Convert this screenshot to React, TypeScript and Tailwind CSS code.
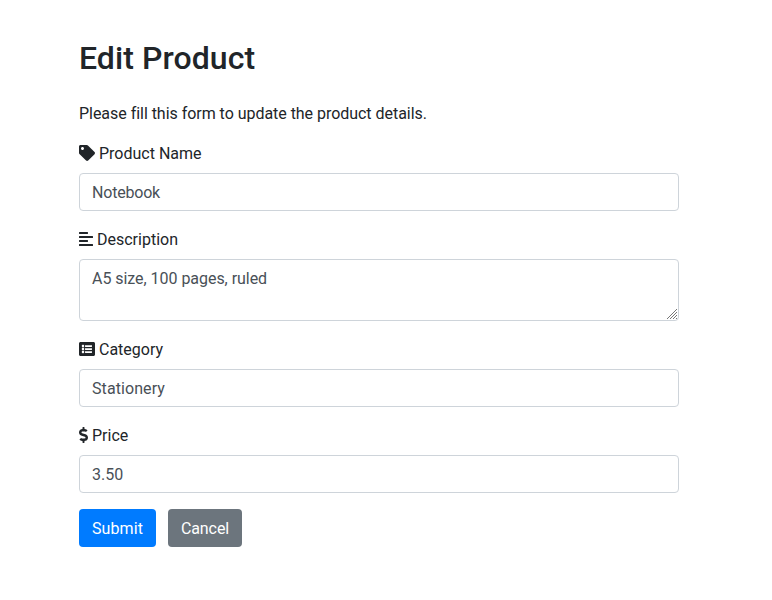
import React from "react";
import { FaTag, FaAlignLeft, FaListAlt, FaDollarSign } from "react-icons/fa";

const field =
  "block w-full rounded border border-[#ced4da] bg-white px-3 py-1.5 text-base leading-6 text-[#495057] outline-none";

function Field({ icon, label, children }: { icon: React.ReactNode; label: string; children: React.ReactNode }) {
  return (
    <div className="mb-4">
      <label className="mb-2 flex h-6 items-center gap-1">
        {icon}
        <span className="pt-0.5">{label}</span>
      </label>
      {children}
    </div>
  );
}

export default function App() {
  return (
    <div className="min-h-[600px] bg-white font-['Roboto',sans-serif] text-base leading-6 text-[#212529]">
      <div className="ml-[79px] w-[600px] pt-[39px]">
        <h2 className="mb-[25px] text-[32px] leading-[38px] font-medium tracking-[0.08px]">Edit Product</h2>
        <p className="mb-[15px] tracking-[-0.035px]">Please fill this form to update the product details.</p>
        <form>
          <Field icon={<FaTag className="h-4 w-4" />} label="Product Name">
            <input className={`${field} h-[38px] tracking-[-0.2px]`} defaultValue="Notebook" />
          </Field>
          <Field icon={<FaAlignLeft className="h-4 w-3.5" />} label="Description">
            <div className="relative">
              <textarea
                className={`${field} h-[62px] resize-none overflow-auto pt-[7px] pb-[5px] tracking-[-0.04px]`}
                defaultValue="A5 size, 100 pages, ruled"
              />
              <svg
                className="pointer-events-none absolute right-0.5 bottom-0.5 h-[10px] w-[10px]"
                viewBox="0 0 10 10"
                shapeRendering="crispEdges"
                stroke="#777"
              >
                <path d="M0 10L10 0M3 10L10 3M6 10L10 6M9 10L10 9" />
              </svg>
            </div>
          </Field>
          <Field icon={<FaListAlt className="h-4 w-4" />} label="Category">
            <input className={`${field} h-[38px] tracking-[0.08px]`} defaultValue="Stationery" />
          </Field>
          <Field icon={<FaDollarSign className="h-4 w-[9px]" />} label="Price">
            <input className={`${field} h-[38px]`} defaultValue="3.50" />
          </Field>
          <div className="flex gap-3">
            <button type="button" className="h-[38px] w-[77px] rounded bg-[#007bff] pt-0.5 tracking-[0.12px] text-white">
              Submit
            </button>
            <button type="button" className="h-[38px] w-[74px] rounded bg-[#6c757d] pt-0.5 tracking-[-0.08px] text-white">
              Cancel
            </button>
          </div>
        </form>
      </div>
    </div>
  );
}
